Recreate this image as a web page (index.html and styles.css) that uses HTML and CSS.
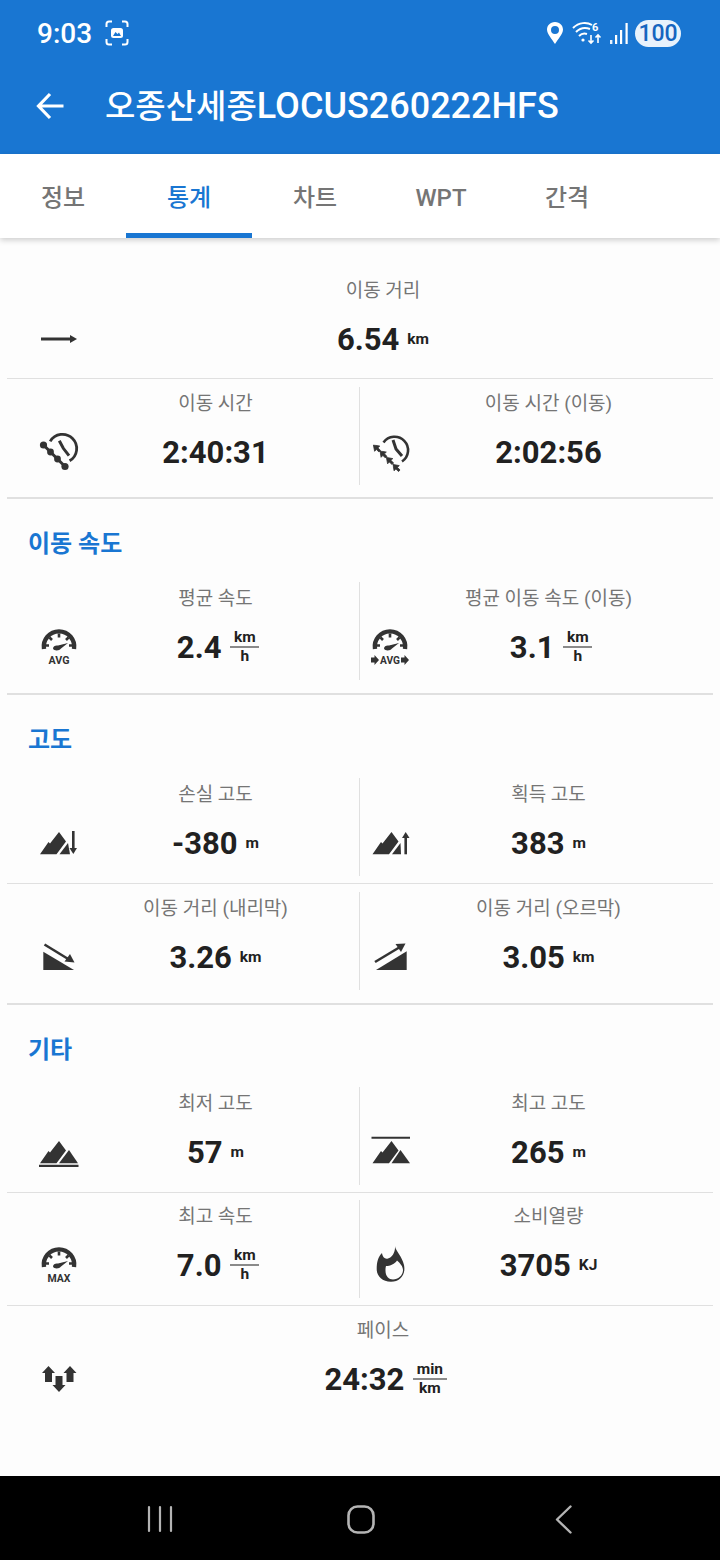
FILE: index.html
```html
<!DOCTYPE html>
<html lang="ko">
<head>
  <meta charset="UTF-8" />
  <meta name="viewport" content="width=device-width, initial-scale=1.0"/>
  <title>오종산세종LOCUS260222HFS</title>
  <link rel="stylesheet" href="styles.css">
</head>

<body>
  <svg class="defs" width="0" height="0">
    <symbol id="gauge" viewBox="0 0 40 40">
      <path d="M5 22 A15.2 15.2 0 1 1 35 22" fill="none" stroke="currentColor" stroke-width="4.4"/>
      <path d="M20 6.5 V10.5 M10.5 10.5 L13 13 M29.5 10.5 L27 13 M7 18.5 H10 M33 18.5 H30" stroke="currentColor" stroke-width="2.6"/>
      <path d="M14 21.5 C14 19 17 18 19 18.6 L29 16 L22 21.5 C20.5 24 15 24.3 14 21.5 Z" fill="currentColor"/>
    </symbol>
    <symbol id="peaks" viewBox="0 0 40 40">
      <path d="M1 31.3 L9.5 19 L11 20.5 L20 9 L27 18.5 L17.5 31.3 Z" fill="currentColor"/>
    </symbol>
    <symbol id="head" viewBox="-5 -5 10 10">
      <path d="M-4.5 -4.5 L3.5 -3 L1.2 -0.8 L4.5 2.5 L2.5 4.5 L-0.8 1.2 L-3 3.5 Z" fill="currentColor"/>
    </symbol>
  </svg>

  <header class="appBar">
    <div class="statusBar">
      <span class="clock">9:03</span>
      <svg class="shotIcon" width="24" height="26" viewBox="0 0 24 26" fill="none" stroke="#fff" stroke-width="2">
        <path d="M1.5 7 V4 Q1.5 1.5 4 1.5 H7 M17 1.5 H20 Q22.5 1.5 22.5 4 V7 M22.5 19 V22 Q22.5 24.5 20 24.5 H17 M7 24.5 H4 Q1.5 24.5 1.5 22 V19"/>
        <rect x="6" y="8" width="12" height="10" rx="2.5" fill="#fff" stroke="none"/>
        <path d="M8 16 L10.5 12 L12.5 14 L14 12.5 L16 16 Z" fill="#1976d2" stroke="none"/>
      </svg>
      <div class="statusRight">
        <svg class="pinIcon" width="20" height="26" viewBox="0 0 20 26"><path fill-rule="evenodd" d="M10 2 C4.8 2 2 6 2 9.5 C2 14 7 19 10 24 C13 19 18 14 18 9.5 C18 6 15.2 2 10 2 Z M10 6 A4 4 0 1 1 10 14 A4 4 0 1 1 10 6 Z" fill="#fff"/></svg>
        <svg width="32" height="28" viewBox="0 0 32 28" fill="none" stroke="#fff" stroke-width="2">
          <path d="M1 9 C7 3 15 3 20 6 M4 13 C8 9 13 8 18 10 M7 17 C9 15 12 14 15 15"/>
          <circle cx="11" cy="21" r="1.6" fill="#fff" stroke="none"/>
          <text x="20" y="12" class="wifiNum">6</text>
          <path d="M19 16 V24 M16.5 21.5 L19 24 L21.5 21.5 M26 24 V16 M23.5 18.5 L26 16 L28.5 18.5" stroke-width="1.6"/>
        </svg>
        <svg width="20" height="26" viewBox="0 0 20 26" fill="#fff">
          <rect x="1" y="20" width="2.4" height="4" opacity=".9"/><rect x="6" y="15" width="2.2" height="9"/><rect x="11" y="10" width="2.2" height="14"/><rect x="16.5" y="3" width="2.2" height="21"/>
        </svg>
        <span class="battery">100</span>
      </div>
    </div>
    <div class="toolbar">
      <svg class="backIcon" width="28" height="28" viewBox="0 0 28 28" fill="none" stroke="#fff" stroke-width="3.2">
        <path d="M27.5 14 H3 M14 2 L2.5 14 L14 26"/>
      </svg>
      <h1><span class="hangul">오종산세종</span>LOCUS260222HFS</h1>
    </div>
  </header>

  <nav class="tabs">
    <a class="tab">정보</a>
    <a class="tab active">통계</a>
    <a class="tab">차트</a>
    <a class="tab latin">WPT</a>
    <a class="tab">간격</a>
  </nav>

  <main class="stats">
    <section class="group">
      <div class="row first">
        <div class="cell">
          <svg class="icon" viewBox="0 0 40 40"><path d="M2 20 H32" stroke="currentColor" stroke-width="3"/><path d="M31 16 L38 20 L31 24 Z" fill="currentColor"/></svg>
          <div class="label">이동 거리</div>
          <div class="value">6.54 <span class="unit">km</span></div>
        </div>
      </div>
      <div class="row split">
        <div class="cell">
          <svg class="icon" viewBox="0 0 40 40" fill="none" stroke="currentColor">
            <path d="M11.2 9.4 A14.2 14.2 0 1 1 30.6 28.8" stroke-width="2.8"/>
            <path d="M20.3 8.7 L24.3 16.3 L30 23.7" stroke-width="3"/>
            <path d="M4.5 13 L26 34.5" stroke-width="3"/>
            <g fill="currentColor" stroke="none"><circle cx="4.5" cy="13" r="3.6"/><circle cx="11.5" cy="20" r="3.4"/><circle cx="18.5" cy="27" r="3.4"/><circle cx="26" cy="34.5" r="3.6"/></g>
          </svg>
          <div class="label">이동 시간</div>
          <div class="value">2:40:31</div>
        </div>
        <div class="cell">
          <svg class="icon" viewBox="0 0 40 40" fill="none" stroke="currentColor">
            <path d="M13.5 10.5 A13.5 13.5 0 1 1 32 29.5" stroke-width="2.6"/>
            <path d="M23 8 L26 17 L32 24" stroke-width="3"/>
            <use href="#head" x="3" y="12.5" width="8" height="8"/>
            <use href="#head" x="9.5" y="18.5" width="8" height="8"/>
            <use href="#head" x="16" y="25" width="8" height="8"/>
            <use href="#head" x="22.5" y="32" width="8" height="8"/>
          </svg>
          <div class="label">이동 시간 (이동)</div>
          <div class="value">2:02:56</div>
        </div>
      </div>
    </section>

    <section class="group">
      <h2>이동 속도</h2>
      <div class="row split">
        <div class="cell">
          <svg class="icon" viewBox="0 0 40 40"><use href="#gauge"/><text x="20" y="37" class="gaugeText" textLength="21" lengthAdjust="spacingAndGlyphs">AVG</text></svg>
          <div class="label">평균 속도</div>
          <div class="value hasFrac">2.4 <span class="frac"><span>km</span><span>h</span></span></div>
        </div>
        <div class="cell">
          <svg class="icon" viewBox="0 0 40 40"><use href="#gauge"/><text x="20" y="37" class="gaugeText" textLength="20" lengthAdjust="spacingAndGlyphs">AVG</text>
            <path d="M1 30.5 H4.5 V28 L9 33 L4.5 38 V35.5 H1 Z M31 30.5 H34.5 V28 L39 33 L34.5 38 V35.5 H31 Z" fill="currentColor"/></svg>
          <div class="label">평균 이동 속도 (이동)</div>
          <div class="value hasFrac">3.1 <span class="frac"><span>km</span><span>h</span></span></div>
        </div>
      </div>
    </section>

    <section class="group">
      <h2>고도</h2>
      <div class="row split">
        <div class="cell">
          <svg class="icon" viewBox="0 0 40 40">
            <use href="#peaks"/>
            <path d="M20.5 31.3 L29 20 L31 31.3 Z" fill="currentColor"/>
            <path d="M34.3 8 V27" stroke="currentColor" stroke-width="2.6"/><path d="M30.5 25 H38 L34.3 31 Z" fill="currentColor"/>
          </svg>
          <div class="label">손실 고도</div>
          <div class="value">-380 <span class="unit">m</span></div>
        </div>
        <div class="cell">
          <svg class="icon" viewBox="0 0 40 40">
            <use href="#peaks" x="1.5"/>
            <path d="M22 31.3 L30.5 20 L31 31.3 Z" fill="currentColor"/>
            <path d="M35.7 13 V31.3" stroke="currentColor" stroke-width="2.6"/><path d="M32 15 H39.5 L35.7 9 Z" fill="currentColor"/>
          </svg>
          <div class="label">획득 고도</div>
          <div class="value">383 <span class="unit">m</span></div>
        </div>
      </div>
      <div class="row split">
        <div class="cell">
          <svg class="icon" viewBox="0 0 40 40">
            <path d="M4.3 14.7 L35 33 H4.3 Z" fill="currentColor"/>
            <path d="M5.5 7.5 L30 22.5" stroke="currentColor" stroke-width="2.6"/><path d="M25.5 24.5 L35.5 25.5 L31 17 Z" fill="currentColor"/>
          </svg>
          <div class="label">이동 거리 (내리막)</div>
          <div class="value">3.26 <span class="unit">km</span></div>
        </div>
        <div class="cell">
          <svg class="icon" viewBox="0 0 40 40">
            <path d="M6 33 H36.7 V14.3 Z" fill="currentColor"/>
            <path d="M5 25 L30 10" stroke="currentColor" stroke-width="2.6"/><path d="M25.5 7 L35.5 6.5 L31 15 Z" fill="currentColor"/>
          </svg>
          <div class="label">이동 거리 (오르막)</div>
          <div class="value">3.05 <span class="unit">km</span></div>
        </div>
      </div>
    </section>

    <section class="group last">
      <h2>기타</h2>
      <div class="row split">
        <div class="cell">
          <svg class="icon" viewBox="0 0 40 40">
            <use href="#peaks"/>
            <path d="M20 31.3 L30 18 L39 31.3 Z" fill="currentColor"/>
            <path d="M0 33.8 H39.5" stroke="currentColor" stroke-width="2.2"/>
          </svg>
          <div class="label">최저 고도</div>
          <div class="value">57 <span class="unit">m</span></div>
        </div>
        <div class="cell">
          <svg class="icon" viewBox="0 0 40 40">
            <use href="#peaks" x="1.5"/>
            <path d="M21.5 31.3 L30.5 18 L40 31.3 Z" fill="currentColor"/>
            <path d="M1.5 5.8 H40" stroke="currentColor" stroke-width="2"/>
          </svg>
          <div class="label">최고 고도</div>
          <div class="value">265 <span class="unit">m</span></div>
        </div>
      </div>
      <div class="row split tight">
        <div class="cell">
          <svg class="icon" viewBox="0 0 40 40"><use href="#gauge"/><text x="20" y="37" class="gaugeText" textLength="23" lengthAdjust="spacingAndGlyphs">MAX</text></svg>
          <div class="label">최고 속도</div>
          <div class="value hasFrac">7.0 <span class="frac"><span>km</span><span>h</span></span></div>
        </div>
        <div class="cell">
          <svg class="icon" viewBox="0 0 40 40">
            <path fill-rule="evenodd" fill="currentColor" d="M25 1 C25.5 6 32 11 34 20 C36 30 30 36.7 21 36.7 C12 36.7 6.7 31 6.7 24 C6.7 17 8 12 12 8 C12.5 12 15 14.5 18 13.5 C22 12.5 25.5 7 25 1 Z M16 21 C20 21 25 19 27 15.5 C30 18 33 21.5 33 25 C33 30.5 28 34.5 23 34.5 C19 34.5 15.5 31 15.5 26 C15.5 24 15.5 22.5 16 21 Z"/>
          </svg>
          <div class="label">소비열량</div>
          <div class="value">3705 <span class="unit">KJ</span></div>
        </div>
      </div>
      <div class="row">
        <div class="cell">
          <svg class="icon" viewBox="0 0 40 40" fill="currentColor">
            <path d="M9.5 7 L16 14 H13 V23 H6 V14 H3 Z"/>
            <path d="M31 7 L37.5 14 H34.5 V23 H27.5 V14 H24.5 Z"/>
            <path d="M16.5 17 H23.5 V26 H26.5 L20 33 L13.5 26 H16.5 Z"/>
          </svg>
          <div class="label">페이스</div>
          <div class="value hasFrac">24:32 <span class="frac"><span>min</span><span>km</span></span></div>
        </div>
      </div>
    </section>
  </main>

  <footer class="navBar">
    <svg width="26" height="28" viewBox="0 0 26 28" stroke="#b4b4b4" stroke-width="2.2" stroke-linecap="round"><path d="M2 2 V26 M13 2 V26 M24 2 V26"/></svg>
    <svg class="homeIcon" width="28" height="29" viewBox="0 0 28 29" fill="none" stroke="#b4b4b4" stroke-width="2.6"><rect x="1.5" y="1.5" width="25" height="26" rx="9"/></svg>
    <svg width="17" height="29" viewBox="0 0 17 29" fill="none" stroke="#b4b4b4" stroke-width="2.4" stroke-linecap="round" stroke-linejoin="round"><path d="M15.5 1.5 L2 14.5 L15.5 27.5"/></svg>
  </footer>
</body>
</html>
```

FILE: styles.css
```css
* {
  box-sizing: border-box;
}

body {
  margin: 0;
  width: 720px;
  height: 1560px;
  display: flex;
  flex-direction: column;
  background-color: #fdfdfd;
  font-family: Roboto, "Noto Sans CJK KR", sans-serif;
  color: #212121;
  overflow: hidden;
}

.defs {
  position: absolute;
}

.appBar {
  height: 154px;
  background-color: #1976d2;
  color: white;
}

.statusBar {
  height: 66px;
  display: flex;
  align-items: center;
  padding: 0 39px 0 37px;
}

.clock {
  font-size: 28px;
  font-weight: 500;
  width: 56px;
}

.shotIcon {
  margin-left: 12px;
}

.statusRight {
  margin-left: auto;
  display: flex;
  align-items: center;
  gap: 5px;
}

.pinIcon {
  margin-right: 2px;
}

.wifiNum {
  font-size: 11px;
  font-weight: 700;
  fill: white;
  stroke: none;
}

.battery {
  width: 46px;
  height: 27px;
  margin-left: 1px;
  border-radius: 14px;
  background-color: #e8f2fc;
  color: #1565c0;
  font-size: 23px;
  font-weight: 500;
  line-height: 27px;
  text-align: center;
}

.toolbar {
  height: 80px;
  display: flex;
  align-items: center;
  padding-left: 36px;
}

.backIcon {
  margin-right: 41px;
}

.toolbar h1 {
  margin: 0 0 4px;
  font-size: 36px;
  font-weight: 500;
  white-space: nowrap;
}

.hangul {
  font-size: 33px;
}

.tabs {
  position: relative;
  height: 84px;
  display: flex;
  background-color: #fff;
  box-shadow: 0 2px 6px rgba(0, 0, 0, 0.2);
}

.tab {
  width: 126px;
  display: flex;
  align-items: center;
  justify-content: center;
  padding-top: 3px;
  font-size: 24px;
  font-weight: 500;
  color: #757575;
  border-bottom: 5px solid transparent;
}

.tab.latin {
  padding-top: 9px;
}

.tab.active {
  color: #1976d2;
  border-bottom-color: #1976d2;
}

.stats {
  flex: 1;
  padding: 0 7px;
}

.group {
  border-bottom: 2px solid #e0e0e0;
}

.group.last {
  border-bottom: none;
}

.group h2 {
  margin: 0;
  height: 75px;
  padding: 27px 0 0 21px;
  font-size: 24px;
  line-height: 36px;
  font-weight: 700;
  color: #1976d2;
}

.group.last h2 {
  height: 74px;
}

.row {
  display: flex;
  padding: 8px 0 7px;
  border-bottom: 1px solid #e0e0e0;
}

.row.tight {
  padding: 7px 0;
}

.group .row:last-child {
  padding-bottom: 13px;
  border-bottom: none;
}

.group:first-child .row:last-child {
  padding-bottom: 12px;
}

.group.last .row:last-child {
  padding-bottom: 0;
}

.row.first {
  padding-top: 36px;
  padding-bottom: 6px;
}

.cell {
  flex: 1;
  height: 98px;
  display: grid;
  grid-template-columns: 40px 1fr;
  grid-template-rows: 31px 66px;
  padding: 1px 26px 0 32px;
}

.split .cell {
  flex: 0 0 353px;
}

.split .cell:first-child {
  padding-right: 7px;
  border-right: 1px solid #e0e0e0;
}

.split .cell:last-child {
  padding-left: 10px;
}

.icon {
  grid-column: 1;
  grid-row: 2;
  width: 40px;
  height: 40px;
  align-self: center;
  color: #333;
  overflow: visible;
}

.gaugeText {
  font-size: 11px;
  font-weight: 700;
  text-anchor: middle;
  fill: currentColor;
}

.label {
  grid-column: 2;
  grid-row: 1;
  align-self: center;
  text-align: center;
  font-size: 19px;
  line-height: 30px;
  color: #757575;
  white-space: nowrap;
}

.value {
  grid-column: 2;
  grid-row: 2;
  display: flex;
  align-items: center;
  justify-content: center;
  gap: 8px;
  font-size: 31px;
  font-weight: 700;
  white-space: nowrap;
}

.value.hasFrac {
  padding-left: 5px;
}

.unit {
  font-size: 15.5px;
  font-weight: 700;
}

.frac {
  display: inline-flex;
  flex-direction: column;
  align-items: center;
  margin-left: 1px;
  font-size: 15.5px;
  line-height: 17px;
}

.frac span:first-child {
  align-self: stretch;
  padding: 0 3.5px;
  text-align: center;
  border-bottom: 2px solid #8a8a8a;
}

.navBar {
  height: 84px;
  background-color: #000;
  display: flex;
  align-items: center;
  padding: 2px 0 0 147px;
}

.homeIcon {
  margin: 0 180px 0 174px;
}
```
